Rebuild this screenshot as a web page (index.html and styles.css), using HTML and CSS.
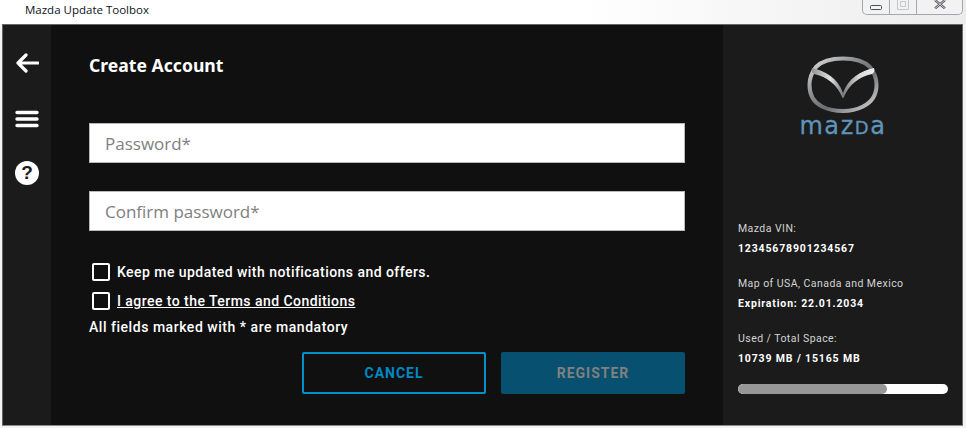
FILE: index.html
```html
<!DOCTYPE html>
<html>
<head>
    <title>Mazda Update Toolbox</title>
    <link rel="stylesheet" href="styles.css">
</head>
<body>
    <div class="titlebar">
        <span class="app-title">Mazda Update Toolbox</span>
        <div class="win-controls">
            <div class="win-btn win-min">
                <svg width="12" height="5" viewBox="0 0 12 5"><rect x="0.5" y="0.5" width="11" height="4" rx="1" fill="#f4f4f4" stroke="#44505c"/></svg>
            </div>
            <div class="win-btn win-max">
                <svg width="12" height="10" viewBox="0 0 12 10"><path d="M0.500 0V9.500H11.500V0M3.500 1.500H8.500V6.500H3.500Z" fill="none" stroke="#c4c8cc"/></svg>
            </div>
            <div class="win-btn win-close">
                <svg width="12" height="9" viewBox="0 0 12 9"><path d="M1 0l10 8.500M11 0L1 8.500" fill="none" stroke="#5a6068" stroke-width="2.400"/><path d="M1 0l10 8.500M11 0L1 8.500" fill="none" stroke="#f0f0f0" stroke-width="0.700"/></svg>
            </div>
        </div>
    </div>

    <div class="window">
        <!-- Left icon strip -->
        <div class="sidebar">
            <svg class="side-icon" width="24" height="20" viewBox="0 0 24 20">
                <path d="M23 10H3M11 2l-8 8 8 8" fill="none" stroke="#fff" stroke-width="3.2" stroke-linecap="round" stroke-linejoin="round"/>
            </svg>
            <svg class="side-icon" width="24" height="18" viewBox="0 0 24 18">
                <path d="M2 2.500h20M2 9h20M2 15.500h20" fill="none" stroke="#fff" stroke-width="3.400" stroke-linecap="round"/>
            </svg>
            <div class="help-icon">?</div>
        </div>

        <!-- Form -->
        <div class="main">
            <h1 class="heading">Create Account</h1>
            <input class="field" type="text" placeholder="Password*">
            <input class="field" type="text" placeholder="Confirm password*">

            <div class="check-row check-first">
                <span class="check"></span>
                <span>Keep me updated with notifications and offers.</span>
            </div>
            <div class="check-row">
                <span class="check"></span>
                <a class="terms" href="#">I agree to the Terms and Conditions</a>
            </div>
            <div class="note">All fields marked with * are mandatory</div>

            <div class="actions">
                <button class="btn btn-cancel">CANCEL</button>
                <button class="btn btn-register">REGISTER</button>
            </div>
        </div>

        <!-- Vehicle info -->
        <div class="info">
            <div class="logo">
                <svg width="72" height="58" viewBox="0 0 72 58">
                    <defs>
                        <linearGradient id="chrome" x1="0" y1="0" x2="1" y2="1">
                            <stop offset="0" stop-color="#e4e4e4"/>
                            <stop offset="0.35" stop-color="#8c8e90"/>
                            <stop offset="0.6" stop-color="#6a6c6e"/>
                            <stop offset="0.85" stop-color="#b0b2b4"/>
                            <stop offset="1" stop-color="#e0e0e0"/>
                        </linearGradient>
                        <linearGradient id="wing" x1="0" y1="0" x2="1" y2="0">
                            <stop offset="0" stop-color="#8e9092"/>
                            <stop offset="0.3" stop-color="#e2e2e2"/>
                            <stop offset="0.5" stop-color="#77797c"/>
                            <stop offset="0.75" stop-color="#d8d8d8"/>
                            <stop offset="1" stop-color="#f0f0f0"/>
                        </linearGradient>
                    </defs>
                    <path d="M36 2.500C50 2.500 58 6 63 11C67 16 69.500 22 69.500 29C69.500 38 65 46 56 50.500C50 53.500 43 55 36 55C29 55 21 53.500 15 50.500C6 46 2.500 38 2.500 29C2.500 22 5 16 9 11C14 6 22 2.500 36 2.500Z" fill="none" stroke="url(#chrome)" stroke-width="4"/>
                    <path d="M5 12C18 15 31 22 36 37C41 22 54 15 67 12C68 14 67 17 65 18C52 21 42 28 36.500 42H35.500C30 28 20 21 7 18C5 17 4 14 5 12Z" fill="url(#wing)"/>
                </svg>
                <div class="wordmark">maz<span class="wordmark-d">D</span>a</div>
            </div>

            <div class="info-block">
                <div class="info-label">Mazda VIN:</div>
                <div class="info-value">12345678901234567</div>
            </div>
            <div class="info-block">
                <div class="info-label">Map of USA, Canada and Mexico</div>
                <div class="info-value">Expiration: 22.01.2034</div>
            </div>
            <div class="info-block">
                <div class="info-label">Used / Total Space:</div>
                <div class="info-value">10739 MB / 15165 MB</div>
            </div>

            <div class="progress">
                <div class="progress-fill" style="width: 70.8%;"></div>
            </div>
        </div>
    </div>
</body>
</html>
```

FILE: styles.css
```css
* {
    box-sizing: border-box;
}

html, body {
    height: 100%;
}

body {
    margin: 0;
    padding: 0;
    overflow: hidden;
    background-color: #f4f4f4;
    font-family: "Roboto", "Liberation Sans", sans-serif;
}

.titlebar {
    height: 24px;
    display: flex;
    justify-content: space-between;
    align-items: flex-start;
    padding-left: 25px;
    padding-right: 3px;
    background: linear-gradient(90deg, #ffffff 60%, #ececec 100%);
}

.app-title {
    margin-top: 2px;
    font-family: "Open Sans", "Liberation Sans", sans-serif;
    font-size: 11.5px;
    line-height: 16px;
    color: #0a1420;
}

.win-controls {
    display: flex;
    width: 101px;
    height: 15px;
    border: 1px solid #a4a8ac;
    border-top: none;
    border-radius: 0 0 5px 5px;
    background-color: #f2f2f2;
}

.win-btn {
    width: 27px;
    display: flex;
    justify-content: center;
    align-items: flex-start;
    overflow: hidden;
    border-right: 1px solid #a4a8ac;
}

.win-min {
    padding-top: 5px;
}

.win-close {
    flex: 1;
    border-right: none;
}

.window {
    display: flex;
    height: 402px;
    margin-left: 2px;
    margin-right: 3px;
    border: 1px solid #666666;
    border-bottom-color: #8a8a8a;
}

.sidebar {
    width: 48px;
    padding-top: 28px;
    display: flex;
    flex-direction: column;
    align-items: center;
    background-color: #1b1b1b;
}

.side-icon {
    display: block;
    margin-bottom: 37px;
}

.help-icon {
    width: 24px;
    height: 24px;
    margin-top: -4px;
    border-radius: 50%;
    background-color: #ffffff;
    color: #1b1b1b;
    font-family: "Liberation Sans", sans-serif;
    font-size: 19px;
    font-weight: 700;
    line-height: 24px;
    text-align: center;
}

.main {
    width: 672px;
    padding-left: 38px;
    padding-top: 28px;
    background-color: #101010;
}

.heading {
    margin: 0 0 45px 0;
    color: #ffffff;
    font-family: "Noto Sans", sans-serif;
    font-size: 17.6px;
    font-weight: 700;
    line-height: 25px;
}

.field {
    display: block;
    width: 596px;
    height: 40px;
    margin-bottom: 28px;
    padding: 0 15px;
    border: 1px solid #b8b8b8;
    border-radius: 0;
    background-color: #ffffff;
    font-family: "Open Sans", sans-serif;
    font-size: 17px;
    color: #555555;
    outline: none;
}

.field::placeholder {
    color: #808080;
    opacity: 1;
}

.check-row {
    display: flex;
    align-items: center;
    height: 18px;
    margin-bottom: 11px;
    padding-left: 3px;
    color: #ffffff;
    font-size: 14px;
    font-weight: 500;
    letter-spacing: 0.45px;
}

.check-first {
    margin-top: 32px;
}

.check {
    width: 18px;
    height: 18px;
    margin-right: 7px;
    border: 2px solid #ffffff;
    border-radius: 2px;
}

.terms {
    color: #ffffff;
    text-decoration: underline;
}

.note {
    margin-top: -3px;
    color: #ffffff;
    font-size: 14px;
    font-weight: 500;
    line-height: 18px;
    letter-spacing: 0.53px;
}

.actions {
    display: flex;
    gap: 15px;
    width: 596px;
    justify-content: flex-end;
    margin-top: 16px;
}

.btn {
    width: 184px;
    height: 42px;
    border-radius: 2px;
    font-family: "Roboto", sans-serif;
    font-size: 14px;
    font-weight: 700;
    letter-spacing: 1px;
}

.btn-cancel {
    border: 2px solid #0090cc;
    background-color: transparent;
    color: #0088c4;
}

.btn-register {
    border: none;
    background-color: #07506f;
    color: #808080;
}

.info {
    flex: 1;
    padding-left: 15px;
    background-color: #1b1b1b;
}

.logo {
    width: 84px;
    height: 194px;
    margin-left: 63px;
    padding-top: 31px;
    display: flex;
    flex-direction: column;
    align-items: center;
}

.wordmark {
    margin-top: 2px;
    font-family: "DejaVu Sans", sans-serif;
    font-size: 24px;
    line-height: 20px;
    letter-spacing: 1.6px;
    white-space: nowrap;
    color: #5f94bb;
    -webkit-text-stroke: 0.3px #5f94bb;
}

.wordmark-d {
    font-size: 18px;
}

.info-block {
    margin-bottom: 15px;
}

.info-label {
    height: 20px;
    color: #d4d4d4;
    font-size: 10.5px;
    line-height: 20px;
    letter-spacing: 0.45px;
}

.info-value {
    height: 20px;
    color: #ffffff;
    font-size: 10.5px;
    font-weight: 700;
    line-height: 20px;
    letter-spacing: 0.85px;
}

.progress {
    width: 210px;
    height: 10px;
    margin-top: 8px;
    border-radius: 5px;
    overflow: hidden;
    background-color: #ffffff;
}

.progress-fill {
    height: 100%;
    border-radius: 5px;
    background-color: #979797;
}
```
